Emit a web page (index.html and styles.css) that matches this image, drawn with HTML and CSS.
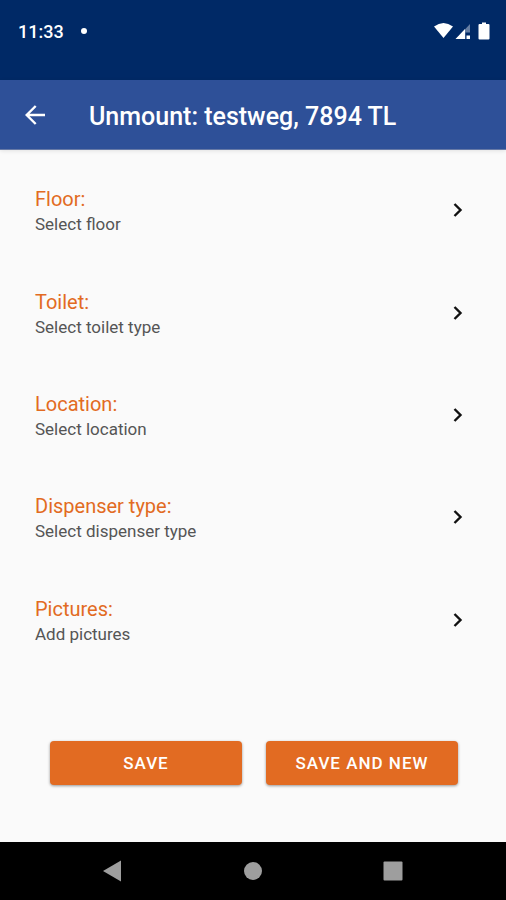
FILE: index.html
```html
<!DOCTYPE html>
<html lang="en">
<head>
<meta charset="utf-8">
<meta name="viewport" content="width=device-width, initial-scale=1">
<title>Unmount</title>
<link rel="stylesheet" href="styles.css">
</head>
<body>
<div class="status">
  <span class="time">11:33</span>
  <span class="dot"></span>
  <svg class="status-icons" width="56" height="20" viewBox="0 0 56 20">
    <path d="M0 5.500Q9.500 -1.500 19 5.500L9.500 17Z" fill="#fff"/>
    <path d="M36 3V11.500H31.500V18H22Z" fill="#fff" opacity=".4"/>
    <path d="M31 8V18H21.500Z" fill="#fff"/>
    <path d="M32.500 14.500H36V18H32.500Z" fill="#fff"/>
    <path d="M48 1.500h4V3h2.500q1 0 1 1V17.500q0 1-1 1h-9q-1 0-1-1V4q0-1 1-1H48Z" fill="#fff"/>
  </svg>
</div>
<header class="appbar">
  <button class="back" type="button" aria-label="Back">
    <svg width="20" height="20" viewBox="0 0 20 20" fill="none" stroke="#fff" stroke-width="2.400"><path d="M20 10H2M10.700 1L1.700 10l9 9"/></svg>
  </button>
  <h1 class="title">Unmount: testweg, 7894 TL</h1>
</header>
<main class="content">
  <div class="list">
    <button class="row" type="button"><span class="text"><span class="label">Floor:</span><span class="value">Select floor</span></span><svg class="chevron" viewBox="0 0 10 16"><path d="M1.500 2L7.500 8l-6 6"/></svg></button>
    <button class="row" type="button"><span class="text"><span class="label">Toilet:</span><span class="value">Select toilet type</span></span><svg class="chevron" viewBox="0 0 10 16"><path d="M1.500 2L7.500 8l-6 6"/></svg></button>
    <button class="row" type="button"><span class="text"><span class="label">Location:</span><span class="value">Select location</span></span><svg class="chevron" viewBox="0 0 10 16"><path d="M1.500 2L7.500 8l-6 6"/></svg></button>
    <button class="row" type="button"><span class="text"><span class="label">Dispenser type:</span><span class="value">Select dispenser type</span></span><svg class="chevron" viewBox="0 0 10 16"><path d="M1.500 2L7.500 8l-6 6"/></svg></button>
    <button class="row" type="button"><span class="text"><span class="label">Pictures:</span><span class="value">Add pictures</span></span><svg class="chevron" viewBox="0 0 10 16"><path d="M1.500 2L7.500 8l-6 6"/></svg></button>
  </div>
  <div class="actions">
    <button class="action" type="button">SAVE</button>
    <button class="action" type="button">SAVE AND NEW</button>
  </div>
</main>
<nav class="navbar">
  <button class="nav" type="button" aria-label="Back"><svg width="20" height="22" viewBox="0 0 20 22"><path d="M0 11L18 .500V21.500Z"/></svg></button>
  <button class="nav" type="button" aria-label="Home"><svg width="20" height="22" viewBox="0 0 20 22"><circle cx="10" cy="11" r="9"/></svg></button>
  <button class="nav" type="button" aria-label="Recent apps"><svg width="20" height="22" viewBox="0 0 20 22"><rect x=".500" y="1.500" width="19" height="19" rx="1"/></svg></button>
</nav>
</body>
</html>
```
FILE: styles.css
```css
* {
  box-sizing: border-box;
}

body {
  margin: 0;
  min-height: 100vh;
  display: flex;
  flex-direction: column;
  background: #fafafa;
  font-family: Roboto, "Liberation Sans", sans-serif;
}

button {
  margin: 0;
  padding: 0;
  border: 0;
  background: none;
  font: inherit;
  cursor: pointer;
}

svg {
  display: block;
}

.status {
  display: flex;
  align-items: center;
  height: 80px;
  padding: 0 16px 18px 18px;
  background: #002966;
  color: #fff;
}

.time {
  font-size: 18px;
  font-weight: 500;
}

.dot {
  width: 6px;
  height: 6px;
  margin-left: 17px;
  border-radius: 50%;
  background: #fff;
}

.status-icons {
  margin-left: auto;
}

.appbar {
  display: flex;
  align-items: center;
  height: 70px;
  padding: 0 25px;
  background: #2e5098;
  border-bottom: 1px solid #6679a6;
  color: #fff;
  box-shadow: 0 1px 4px rgba(0, 0, 0, 0.1);
}

.title {
  margin: 4px 0 0 44px;
  font-size: 25px;
  font-weight: 500;
  line-height: 32px;
}

.content {
  flex: 1;
  display: flex;
  flex-direction: column;
  padding: 9px 0 57px;
}

.list {
  flex: 1;
  display: grid;
  grid-auto-rows: 1fr;
}

.row {
  display: flex;
  align-items: center;
  justify-content: space-between;
  padding: 0 43px 0 35px;
  text-align: left;
}

.text {
  display: flex;
  flex-direction: column;
  padding-top: 2px;
}

.label {
  color: #e26b22;
  font-size: 20px;
  line-height: 26px;
}

.value {
  color: #555;
  font-size: 17px;
  line-height: 24px;
}

.chevron {
  width: 10px;
  height: 16px;
  fill: none;
  stroke: #111;
  stroke-width: 2.4;
}

.actions {
  display: grid;
  grid-template-columns: 1fr 1fr;
  gap: 24px;
  padding: 70px 48px 0 50px;
}

.action {
  height: 44px;
  border-radius: 4px;
  background: #e26b22;
  color: #fff;
  font-size: 17px;
  font-weight: 500;
  letter-spacing: 1px;
  box-shadow: 0 1px 3px rgba(0, 0, 0, 0.4);
}

.navbar {
  display: grid;
  grid-template-columns: repeat(3, 1fr);
  height: 58px;
  padding: 0 43px;
  background: #000;
}

.nav {
  display: flex;
  align-items: center;
  justify-content: center;
}

.nav svg {
  fill: #9e9e9e;
}
```
